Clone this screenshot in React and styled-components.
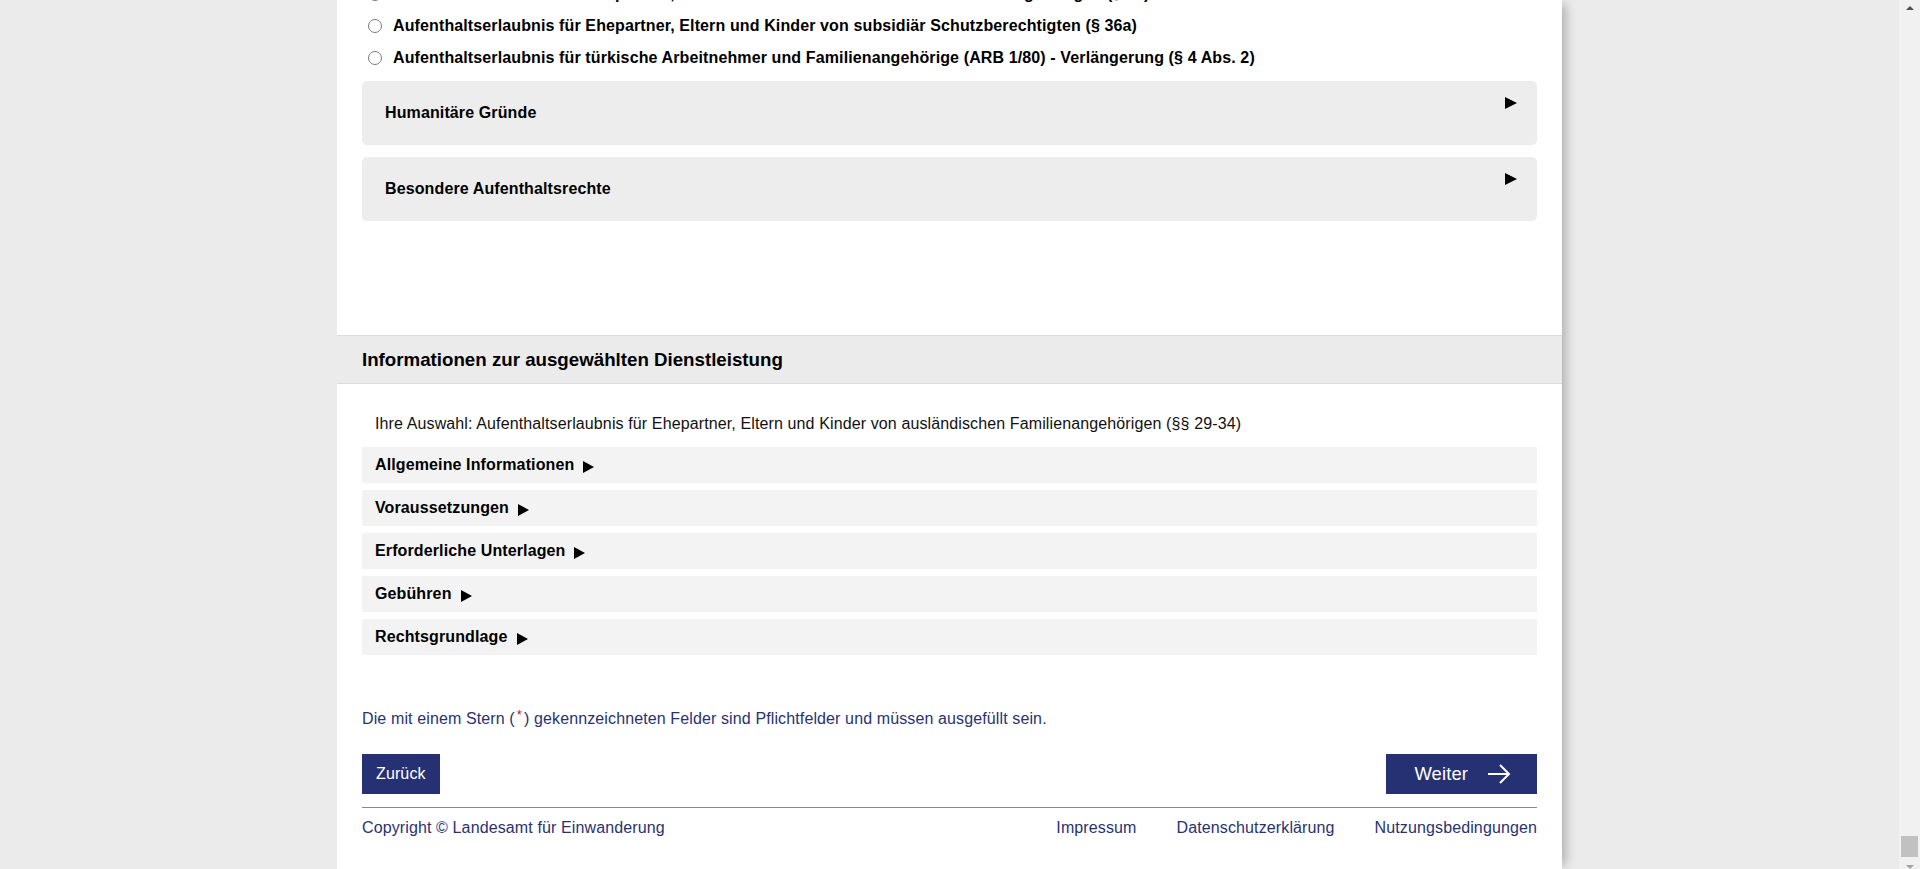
import styled, { createGlobalStyle } from "styled-components";

const GlobalStyle = createGlobalStyle`
  html, body {
    margin: 0;
    padding: 0;
    height: 100%;
    overflow: hidden;
  }
  body {
    font-family: "Liberation Sans", Arial, sans-serif;
    font-size: 16px;
    letter-spacing: 0.12px;
    color: #000;
  }
  #root {
    height: 100%;
  }
`;

const radios = [
  "Aufenthaltserlaubnis für Ehepartner, Eltern und Kinder von deutschen Familienangehörigen (§ 28)",
  "Aufenthaltserlaubnis für Ehepartner, Eltern und Kinder von subsidiär Schutzberechtigten (§ 36a)",
  "Aufenthaltserlaubnis für türkische Arbeitnehmer und Familienangehörige (ARB 1/80) - Verlängerung (§ 4 Abs. 2)",
];

const groups = ["Humanitäre Gründe", "Besondere Aufenthaltsrechte"];

const infoRows = [
  "Allgemeine Informationen",
  "Voraussetzungen",
  "Erforderliche Unterlagen",
  "Gebühren",
  "Rechtsgrundlage",
];

const App = () => {
  return (
    <>
      <GlobalStyle />
      <Page>
        <Viewport>
          <Panel>
            <ChoiceSection>
              {radios.map((r) => (
                <RadioRow key={r}>
                  <RadioCircle />
                  <span>{r}</span>
                </RadioRow>
              ))}
              {groups.map((g) => (
                <GroupBox key={g}>
                  <GroupTitle>{g}</GroupTitle>
                  <Arrow size={12} />
                </GroupBox>
              ))}
            </ChoiceSection>

            <SectionHeader>
              <h3>Informationen zur ausgewählten Dienstleistung</h3>
            </SectionHeader>

            <InfoSection>
              <Selection>
                Ihre Auswahl: Aufenthaltserlaubnis für Ehepartner, Eltern und Kinder von ausländischen Familienangehörigen (§§ 29-34)
              </Selection>
              {infoRows.map((t) => (
                <InfoRow key={t}>
                  {t}
                  <Arrow size={11} />
                </InfoRow>
              ))}
            </InfoSection>

            <FormFooter>
              <Note>
                Die mit einem Stern (<Star>*</Star>) gekennzeichneten Felder sind Pflichtfelder und müssen ausgefüllt sein.
              </Note>
              <ButtonRow>
                <NavButton>Zurück</NavButton>
                <NavButton $big>
                  Weiter
                  <svg width="24" height="22" viewBox="0 0 24 22" fill="none">
                    <path d="M1 11h21M13 2l9 9-9 9" stroke="#fff" strokeWidth="2" />
                  </svg>
                </NavButton>
              </ButtonRow>
              <Divider />
              <FooterBar>
                <span>Copyright © Landesamt für Einwanderung</span>
                <FooterLinks>
                  <span>Impressum</span>
                  <span>Datenschutzerklärung</span>
                  <span>Nutzungsbedingungen</span>
                </FooterLinks>
              </FooterBar>
            </FormFooter>
          </Panel>
        </Viewport>

        <ScrollTrack>
          <ScrollArrow $up />
          <ScrollThumb />
          <ScrollArrow />
        </ScrollTrack>
      </Page>
    </>
  );
};

const Page = styled.div`
  display: flex;
  height: 100%;
  background: #ebebeb;
`;

const Viewport = styled.div`
  flex: 1;
  display: flex;
  justify-content: center;
  overflow: hidden;
`;

const Panel = styled.div`
  width: 1225px;
  background: #fff;
  box-shadow: 8px 0 10px -4px rgba(0, 0, 0, 0.25);
`;

const ChoiceSection = styled.div`
  margin-top: -22px;
  padding: 0 25px 114px;
`;

const RadioRow = styled.label`
  display: flex;
  align-items: center;
  height: 32px;
  font-weight: bold;
  white-space: nowrap;
`;

const RadioCircle = styled.span`
  width: 12px;
  height: 12px;
  border: 1px solid #7a7a7a;
  border-radius: 50%;
  margin: 0 11px 0 6px;
  background: #fff;
  flex-shrink: 0;
`;

const GroupBox = styled.div`
  display: flex;
  justify-content: space-between;
  align-items: center;
  height: 64px;
  margin-top: 7px;
  padding: 0 20px 0 23px;
  background: #ededed;
  border-radius: 5px;
  & + & {
    margin-top: 12px;
  }
  & > span:last-child {
    align-self: flex-start;
    margin-top: 16px;
  }
`;

const GroupTitle = styled.span`
  font-weight: bold;
`;

const Arrow = styled.span`
  width: 0;
  height: 0;
  border-left: ${(p) => p.size}px solid #000;
  border-top: ${(p) => p.size / 2 + 0.5}px solid transparent;
  border-bottom: ${(p) => p.size / 2 + 0.5}px solid transparent;
`;

const SectionHeader = styled.div`
  height: 47px;
  display: flex;
  align-items: center;
  padding: 0 25px;
  background: #ebebeb;
  border-top: 1px solid #dcdcdc;
  border-bottom: 1px solid #dcdcdc;
  h3 {
    margin: 0;
    font-size: 18.72px;
    font-weight: bold;
    letter-spacing: 0;
  }
`;

const InfoSection = styled.div`
  padding: 30px 25px 0;
  display: flex;
  flex-direction: column;
  gap: 7px;
`;

const Selection = styled.div`
  line-height: 20px;
  padding-left: 13px;
  margin-bottom: 6px;
  color: #111;
`;

const InfoRow = styled.div`
  display: flex;
  align-items: center;
  gap: 9px;
  height: 36px;
  padding-left: 13px;
  background: #f3f3f3;
  font-weight: bold;
  & > span {
    margin-top: 3px;
  }
`;

const FormFooter = styled.div`
  padding: 54px 25px 0;
  color: #283272;
`;

const Note = styled.p`
  margin: 0;
  line-height: 20px;
`;

const Star = styled.sup`
  color: #c8102e;
  font-size: 13px;
  margin: 0 2px;
  vertical-align: 5px;
  line-height: 0;
`;

const ButtonRow = styled.div`
  display: flex;
  justify-content: space-between;
  margin-top: 25px;
`;

const NavButton = styled.button`
  display: flex;
  align-items: center;
  gap: 19px;
  height: 40px;
  padding: ${(p) => (p.$big ? "0 26px 0 28px" : "0 14px")};
  border: none;
  background: #263173;
  color: #fff;
  font-family: "Liberation Sans", Arial, sans-serif;
  font-size: ${(p) => (p.$big ? "18.4px" : "16px")};
  letter-spacing: 0.12px;
  cursor: pointer;
`;

const Divider = styled.hr`
  margin: 13px 0 0;
  border: none;
  height: 1px;
  background: #8a8a8a;
`;

const FooterBar = styled.div`
  display: flex;
  justify-content: space-between;
  margin-top: 10px;
  line-height: 20px;
`;

const FooterLinks = styled.div`
  display: flex;
  gap: 40px;
`;

const ScrollTrack = styled.div`
  width: 21px;
  display: flex;
  flex-direction: column;
  align-items: center;
  background: #f1f1f1;
`;

const ScrollArrow = styled.span`
  width: 0;
  height: 0;
  margin: ${(p) => (p.$up ? "6px 0 0" : "8px 0 0")};
  border-left: 4.5px solid transparent;
  border-right: 4.5px solid transparent;
  ${(p) =>
    p.$up
      ? "border-bottom: 4px solid #505050;"
      : "border-top: 4px solid #a3a3a3;"}
`;

const ScrollThumb = styled.span`
  width: 17px;
  height: 21px;
  margin-top: auto;
  background: #c1c1c1;
`;

export default App;
